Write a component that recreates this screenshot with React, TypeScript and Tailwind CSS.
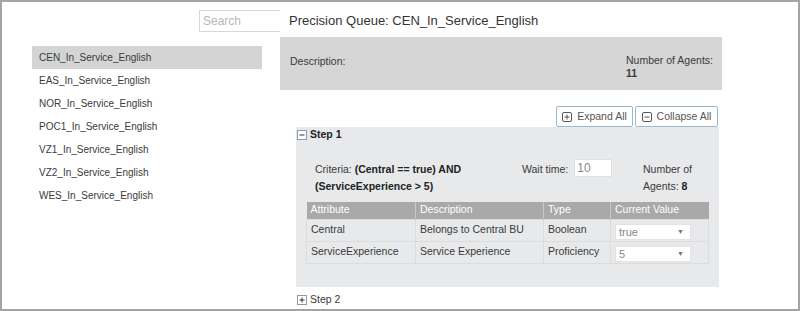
import React from "react";

const queues = [
  "CEN_In_Service_English",
  "EAS_In_Service_English",
  "NOR_In_Service_English",
  "POC1_In_Service_English",
  "VZ1_In_Service_English",
  "VZ2_In_Service_English",
  "WES_In_Service_English",
];

const rows = [
  { attr: "Central", desc: "Belongs to Central BU", type: "Boolean", value: "true" },
  { attr: "ServiceExperience", desc: "Service Experience", type: "Proficiency", value: "5" },
];

function BoxIcon({ plus }: { plus?: boolean }) {
  return (
    <svg width="10" height="10" viewBox="0 0 10 10" className="shrink-0">
      <rect x="0.5" y="0.5" width="9" height="9" fill="#fff" stroke="#8a9bab" />
      <line x1="2.5" y1="5" x2="7.5" y2="5" stroke="#333" />
      {plus && <line x1="5" y1="2.5" x2="5" y2="7.5" stroke="#333" />}
    </svg>
  );
}

function BtnIcon({ plus }: { plus?: boolean }) {
  return (
    <svg width="10" height="10" viewBox="0 0 10 10" className="shrink-0">
      <rect x="0.5" y="0.5" width="9" height="9" rx="1.5" fill="none" stroke="#555" />
      <line x1="2.5" y1="5" x2="7.5" y2="5" stroke="#555" />
      {plus && <line x1="5" y1="2.5" x2="5" y2="7.5" stroke="#555" />}
    </svg>
  );
}

export default function App() {
  return (
    <div className="flex h-[311px] w-[800px] border-2 border-[#a4a4a4] bg-white font-['Liberation_Sans',Arial,sans-serif] text-[10.5px] text-[#3a3a3a]">
      {/* left column */}
      <div className="flex w-[278px] shrink-0 flex-col pt-[8px]">
        <input
          type="text"
          placeholder="Search"
          className="ml-[197px] h-[22px] w-[81px] border border-r-0 border-[#d8d8d8] px-[3px] text-[12px] placeholder:text-[#b8b8b8] focus:outline-none"
        />
        <ul className="ml-[30px] mt-[14px] w-[230px] text-[10px]">
          {queues.map((q, i) => (
            <li
              key={q}
              className={`flex h-[23px] items-center pl-[7px] ${i === 0 ? "bg-[#d4d4d4]" : ""}`}
            >
              {q}
            </li>
          ))}
        </ul>
      </div>

      {/* right column */}
      <div className="flex flex-1 flex-col pt-[11px]">
        <div className="pl-[9px] text-[13px] leading-[16px] text-[#333]">
          Precision Queue: CEN_In_Service_English
        </div>
        <div className="mt-[8px] flex h-[53px] w-[442px] bg-[#d6d6d6] pt-[17px]">
          <div className="w-[346px] pl-[10px]">Description:</div>
          <div className="leading-[13px]">
            <div>Number of Agents:</div>
            <div className="font-bold">11</div>
          </div>
        </div>

        <div className="mt-[16px] flex w-[438px] justify-end gap-[2px]">
          <button className="flex h-[21px] w-[77px] items-center justify-center gap-[5px] rounded-[2px] border border-[#9bb8d0] text-[10.5px] text-[#555]">
            <BtnIcon plus />
            Expand All
          </button>
          <button className="flex h-[21px] w-[83px] items-center justify-center gap-[5px] rounded-[2px] border border-[#9bb8d0] text-[10.5px] text-[#555]">
            <BtnIcon />
            Collapse All
          </button>
        </div>

        <div className="ml-[16px] flex h-[160px] w-[423px] flex-col bg-[#e8e9ea]">
          <div className="flex h-[14px] items-center gap-[3px] pl-[1px] pt-[1px] font-bold text-[#222]">
            <BoxIcon />
            Step 1
          </div>
          <div className="mt-[20px] flex leading-[17px]">
            <div className="w-[226px] pl-[19px]">
              <div>
                Criteria: <b className="text-[#222]">(Central == true) AND</b>
              </div>
              <div className="font-bold text-[#222]">(ServiceExperience &gt; 5)</div>
            </div>
            <div className="flex w-[121px] items-start">
              <span className="mr-[6px]">Wait time:</span>
              <span className="mt-[-2px] flex h-[18px] w-[38px] items-center border border-[#e0e0e0] bg-white px-[2px] text-[12px] text-[#888]">
                10
              </span>
            </div>
            <div className="w-[58px]">
              <div>Number of</div>
              <div>
                Agents: <b className="text-[#222]">8</b>
              </div>
            </div>
          </div>

          <table className="ml-[10px] mt-[7px] w-[403px] border-collapse">
            <thead>
              <tr className="h-[17px] bg-[#a9a9a9] text-left text-white">
                <th className="w-[109px] border-r border-[#c8c8c8] pl-[4px] font-normal">Attribute</th>
                <th className="w-[128px] border-r border-[#c8c8c8] pl-[4px] font-normal">Description</th>
                <th className="w-[67px] border-r border-[#c8c8c8] pl-[4px] font-normal">Type</th>
                <th className="pl-[4px] font-normal">Current Value</th>
              </tr>
            </thead>
            <tbody>
              {rows.map((r) => (
                <tr key={r.attr} className="h-[22px] border border-[#dcdcdc]">
                  <td className="border-r border-[#dcdcdc] pl-[4px]">{r.attr}</td>
                  <td className="border-r border-[#dcdcdc] pl-[4px]">{r.desc}</td>
                  <td className="border-r border-[#dcdcdc] pl-[4px]">{r.type}</td>
                  <td className="pl-[4px]">
                    <div className="flex h-[16px] w-[76px] translate-y-[2px] items-center justify-between border border-[#e2e2e2] bg-white pl-[3px] pr-[6px] text-[11px] text-[#888]">
                      <span>{r.value}</span>
                      <span className="text-[7px] text-[#777]">▼</span>
                    </div>
                  </td>
                </tr>
              ))}
            </tbody>
          </table>
        </div>

        <div className="ml-[17px] mt-[5px] flex items-center gap-[3px]">
          <BoxIcon plus />
          Step 2
        </div>
      </div>
    </div>
  );
}
